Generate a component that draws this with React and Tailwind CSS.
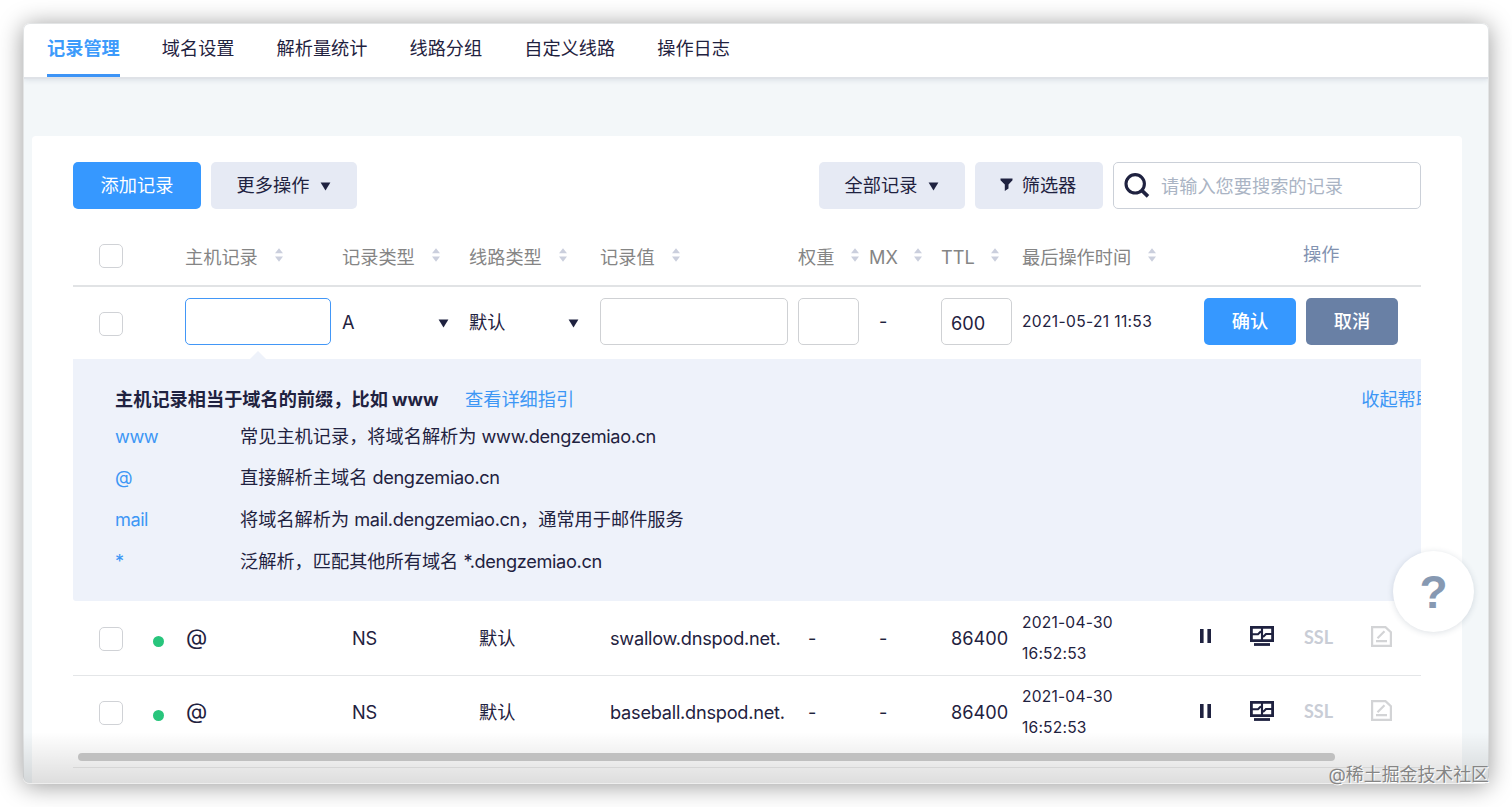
import { useState } from 'react'

const tabs = ['记录管理', '域名设置', '解析量统计', '线路分组', '自定义线路', '操作日志']

const columns = [
  { title: '主机记录', gap: 'gap-[17px]' },
  { title: '记录类型', gap: 'gap-[17px]' },
  { title: '线路类型', gap: 'gap-[17px]' },
  { title: '记录值', gap: 'gap-[17px]' },
  { title: '权重', gap: 'gap-[17px]' },
  { title: 'MX', gap: 'gap-[16px]' },
  { title: 'TTL', gap: 'gap-[16px]' },
  { title: '最后操作时间', gap: 'gap-[17px]' },
]

const tips = [
  { key: 'www', text: '常见主机记录，将域名解析为 ', domain: 'www.dengzemiao.cn' },
  { key: '@', text: '直接解析主域名 ', domain: 'dengzemiao.cn' },
  { key: 'mail', text: '将域名解析为 ', domain: 'mail.dengzemiao.cn', rest: '，通常用于邮件服务' },
  { key: '*', text: '泛解析，匹配其他所有域名 ', domain: '*.dengzemiao.cn' },
]

const records = [
  { host: '@', type: 'NS', line: '默认', value: 'swallow.dnspod.net.', ttl: '86400', date: '2021-04-30', time: '16:52:53' },
  { host: '@', type: 'NS', line: '默认', value: 'baseball.dnspod.net.', ttl: '86400', date: '2021-04-30', time: '16:52:53' },
]

const grid = 'grid grid-cols-[112px_157px_127px_131px_198px_71px_72px_81px_182px_1fr] items-center'

function App() {
  const [active, setActive] = useState(tabs[0])

  return (
    <div className="h-[807px] w-[1512px] overflow-hidden bg-white pl-[23px] pt-[23px] font-['Inter','Noto_Sans_CJK_SC',sans-serif] text-[18.2px] leading-none whitespace-nowrap text-[#1f2240]">
      <div className="relative h-[761px] w-[1466px] rounded-[7px] shadow-[0_2px_24px_rgba(0,0,0,0.4)]">
        <div className="h-full w-full overflow-hidden rounded-[7px] border border-[#e2e4e5] bg-[#f3f7f9]">
          <div className="flex h-[55px] gap-[42px] border-b-2 border-[#dfe2e7] bg-white pl-[23px] shadow-[0_1px_5px_rgba(60,80,110,0.14)]">
            {tabs.map(tab => (
              <button
                key={tab}
                onClick={() => setActive(tab)}
                className={
                  tab === active
                    ? 'h-[53px] border-b-[3px] border-[#3d94f6] pb-[2px] font-bold text-[#3d9bfb]'
                    : 'h-[53px] pb-[5px]'
                }
              >
                {tab}
              </button>
            ))}
          </div>

          <div className="ml-[8px] mt-[57px] h-[660px] w-[1430px] rounded-t-[4px] bg-white px-[41px] pt-[26px]">
            <Toolbar />

            <div className="w-[1348px] overflow-hidden">
              <div className={`${grid} h-[78px] border-b-2 border-[#e1e3e5] pt-[20px] text-[#858585]`}>
                <div className="pb-[3px]">
                  <Checkbox />
                </div>
                {columns.map(col => (
                  <div key={col.title} className={`flex items-center ${col.gap}`}>
                    {col.title}
                    <SortIcon />
                  </div>
                ))}
                <div className="pb-[5px] pl-[99px] text-[#8292b0]">操作</div>
              </div>

              <EditRow />
              <Help />

              {records.map(record => (
                <Row key={record.value} record={record} />
              ))}
            </div>
          </div>
        </div>

        <div className="pointer-events-none absolute inset-x-0 bottom-0 h-[52px] rounded-b-[7px] border-b border-[#eee] bg-linear-to-b from-transparent to-black/13" />
        <div className="absolute bottom-[23px] left-[55px] h-[8px] w-[1257px] rounded-full bg-[#c0c0c0]" />
        <div className="absolute bottom-[16px] left-[50px] h-px w-[1348px] bg-[#d6d6d6]" />

        <button className="absolute right-[15px] top-[528px] flex size-[81px] items-center justify-center rounded-full bg-white font-['Liberation_Sans'] text-[46px] font-bold text-[#8799b2] shadow-[0_1px_6px_rgba(40,60,90,0.16)]">
          ?
        </button>

        <div className="absolute bottom-0 right-0 text-[17.9px] text-[#858585] [text-shadow:1px_1px_0_#fff]">@稀土掘金技术社区</div>
      </div>
    </div>
  )
}

export default App

function Toolbar() {
  return (
    <div className="flex h-[47px] w-[1348px]">
      <button className="w-[128px] rounded-[5px] bg-[#3698ff] text-white">添加记录</button>
      <button className="ml-[10px] flex w-[146px] items-center justify-center gap-[11px] rounded-[5px] bg-[#e6eaf4]">
        更多操作
        <Caret />
      </button>
      <button className="ml-auto flex w-[146px] items-center justify-center gap-[11px] rounded-[5px] bg-[#e6eaf4]">
        全部记录
        <Caret />
      </button>
      <button className="ml-[10px] flex w-[128px] items-center justify-center gap-[9px] rounded-[5px] bg-[#e6eaf4] pr-[2px]">
        <svg className="mb-[2px] h-[13px] w-[13px]" viewBox="0 0 13 13" fill="#1f2240">
          <path d="M0.5 0.5h12v1.7L8.5 6.5v4L4.8 13V6.5L0.5 2.2z" />
        </svg>
        筛选器
      </button>
      <div className="ml-[10px] flex w-[308px] items-center rounded-[5px] border-[1.5px] border-[#cbd0d8] pl-[10px]">
        <svg className="mb-[2px] mr-[11px] h-[26px] w-[26px]" viewBox="0 0 26 26" fill="none" stroke="#1f2240" strokeWidth="3.1">
          <circle cx="11.2" cy="11.8" r="9.2" />
          <path d="M17.8 18.4L24 24.4" strokeWidth="3.6" />
        </svg>
        <input
          type="text"
          placeholder="请输入您要搜索的记录"
          className="w-[230px] leading-[26px] outline-none placeholder:text-[#aab4c4]"
        />
      </div>
    </div>
  )
}

function EditRow() {
  return (
    <div className={`${grid} h-[72px] pb-[3px]`}>
      <div className="pt-[5px]">
        <Checkbox />
      </div>
      <input type="text" className="h-[47px] w-[146px] rounded-[5px] border-[1.5px] border-[#4297f7] px-[10px] outline-none" />
      <div className="flex items-center justify-between pr-[20px] pt-[2px]">
        A
        <Caret />
      </div>
      <div className="flex items-center justify-between pr-[21px] pt-[2px]">
        默认
        <Caret />
      </div>
      <input type="text" className="h-[47px] w-[188px] rounded-[5px] border-[1.5px] border-[#cfd1d4] px-[10px]" />
      <input type="text" className="h-[47px] w-[61px] rounded-[5px] border-[1.5px] border-[#cfd1d4] px-[10px]" />
      <div className="pl-[10px]">-</div>
      <input type="text" defaultValue="600" className="h-[47px] w-[71px] rounded-[5px] border-[1.5px] border-[#cfd1d4] px-[9px] pt-[2px]" />
      <div className="text-[15.6px] tracking-[0.33px]">2021-05-21 11:53</div>
      <div className="flex gap-[10px] text-white">
        <button className="h-[47px] w-[92px] rounded-[5px] bg-[#3698ff] font-medium">确认</button>
        <button className="h-[47px] w-[92px] rounded-[5px] bg-[#6980a5] font-medium">取消</button>
      </div>
    </div>
  )
}

function Help() {
  return (
    <div className="relative h-[242px] rounded-b-[3px] bg-[#eef2fa] pl-[42px] pt-[27px]">
      <svg className="absolute -top-[9px] left-[176px] h-[10px] w-[18px]" viewBox="0 0 18 10">
        <path d="M0 10L9 1l9 9z" fill="#eef2fa" />
      </svg>
      <div className="flex h-[27px] items-center">
        <span className="w-[350px] font-bold">主机记录相当于域名的前缀，比如 www</span>
        <a className="text-[#3d97f5]">查看详细指引</a>
        <a className="ml-auto -mr-[13px] text-[#3d97f5]">收起帮助</a>
      </div>
      <dl>
        {tips.map(tip => (
          <div key={tip.key} className="mb-[14.6px] flex h-[27px] items-center first:mt-[9.5px]">
            <dt className="w-[125px] tracking-[-0.5px] text-[#3d97f5]">{tip.key}</dt>
            <dd className="whitespace-pre">
              {tip.text}
              <span className="tracking-[-0.35px]">{tip.domain}</span>
              {tip.rest}
            </dd>
          </div>
        ))}
      </dl>
    </div>
  )
}

function Row({ record }) {
  return (
    <div className={`${grid} h-[74.5px] border-b border-[#e4e6e8] last:border-transparent`}>
      <div className="flex items-center gap-[31px] pt-[2px]">
        <Checkbox />
        <span className="-ml-px mt-[5px] size-[11px] rounded-full bg-[#28c57c]" />
      </div>
      <div className="pb-[2px] pl-[1px] text-[22px]">{record.host}</div>
      <div className="pl-[10px] tracking-[-0.2px]">{record.type}</div>
      <div className="pl-[10px]">{record.line}</div>
      <div className="pl-[10px] tracking-[-0.25px]">{record.value}</div>
      <div className="pl-[10px]">-</div>
      <div className="pl-[10px]">-</div>
      <div className="pl-[10px]">{record.ttl}</div>
      <div className="text-[15.6px] leading-[31px] tracking-[0.2px]">
        {record.date}
        <br />
        {record.time}
      </div>
      <div className="flex items-center pb-[3px]">
        <svg className="-ml-[4px] h-[14px] w-[11px]" viewBox="0 0 11 14" fill="#1f2240">
          <path d="M0 0h3.6v14H0zM7.4 0H11v14H7.4z" />
        </svg>
        <MonitorIcon />
        <span className="ml-[30px] w-[30px] pt-px font-['Lato'] text-[18px] font-bold text-[#c9cdd6]">SSL</span>
        <NoteIcon />
      </div>
    </div>
  )
}

function Checkbox() {
  return <div className="ml-[26px] size-[24px] rounded-[5px] border-[1.5px] border-[#d0d2d6] bg-white" />
}

function Caret() {
  return (
    <svg className="mt-[2px] h-[9px] w-[11px]" viewBox="0 0 11 9" fill="#1f2240">
      <path d="M0.6 0.4h9.8L5.5 8.6z" />
    </svg>
  )
}

function SortIcon() {
  return (
    <svg className="mb-[3px] h-[14px] w-[8px]" viewBox="0 0 8 14" fill="#cbcfdd">
      <path d="M4 0.3L8 5.3H0zM4 13.7L0 8.5h8z" />
    </svg>
  )
}

function MonitorIcon() {
  return (
    <svg className="ml-[39px] h-[20px] w-[24px]" viewBox="0 0 24 20" fill="none" stroke="#1f2240">
      <path d="M1.4 1.4h21.2v13.2H1.4z" strokeWidth="2.8" />
      <path d="M4 18.5h16" strokeWidth="2.8" />
      <path d="M2 8.3h6l3-3M12 1v14M13 11l3-3h6" strokeWidth="2.1" />
    </svg>
  )
}

function NoteIcon() {
  return (
    <svg className="ml-[37px] h-[21px] w-[21px]" viewBox="0 0 21 21" fill="none" stroke="#d3d4d6" strokeWidth="2.2">
      <path d="M1.1 1.1h13.4l5.4 5.2v13.6H1.1z" />
      <path d="M5 15.2h11M6.5 12.2l7-7" />
    </svg>
  )
}
